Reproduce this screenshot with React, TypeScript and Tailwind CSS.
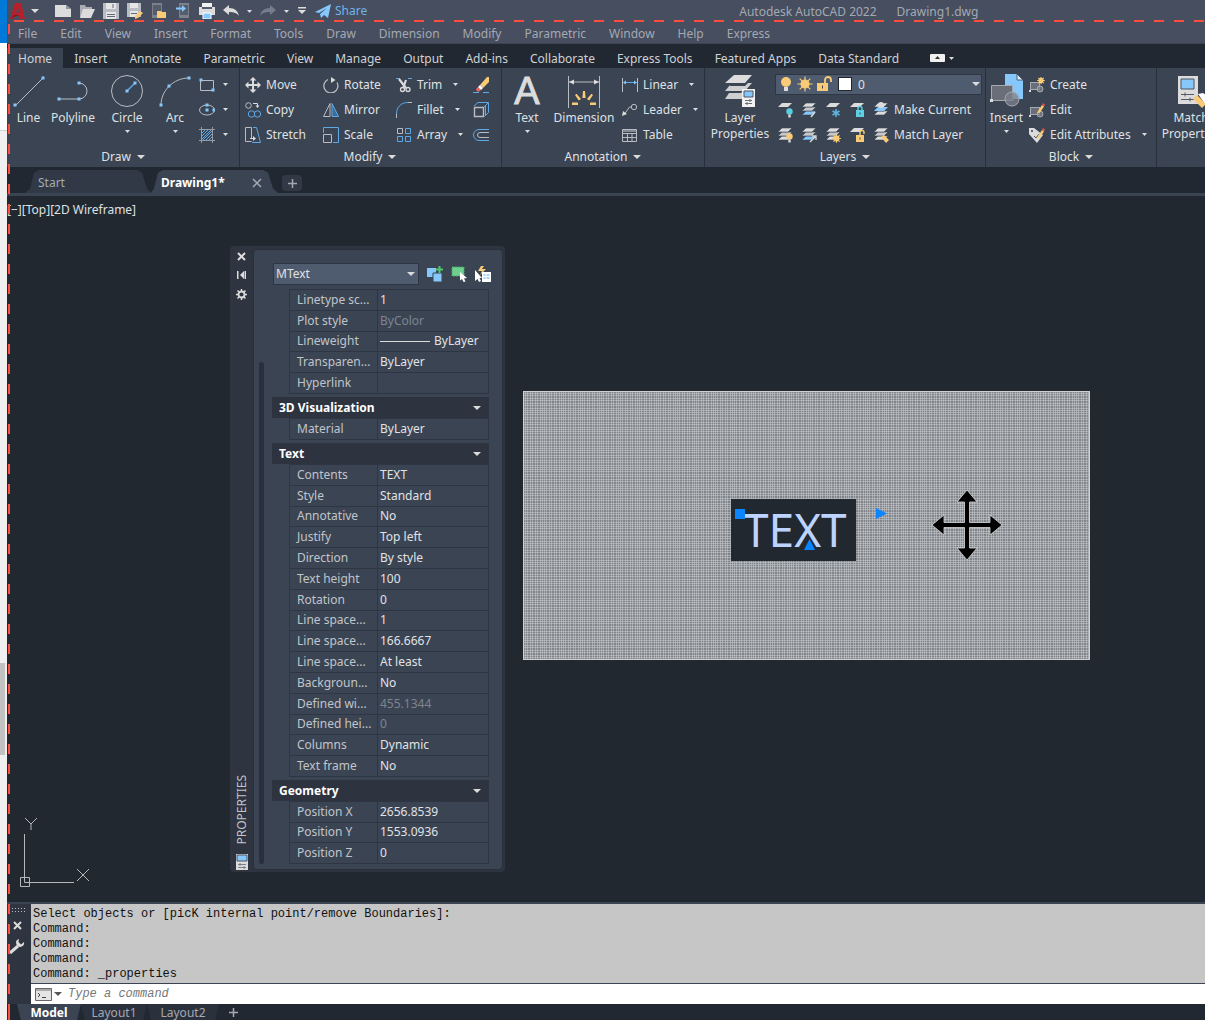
import type { ReactNode } from 'react';

const MENUS = ['File', 'Edit', 'View', 'Insert', 'Format', 'Tools', 'Draw', 'Dimension', 'Modify', 'Parametric', 'Window', 'Help', 'Express'];

const RIBBON_TABS = [
  'Home', 'Insert', 'Annotate', 'Parametric', 'View', 'Manage', 'Output', 'Add-ins',
  'Collaborate', 'Express Tools', 'Featured Apps', 'Data Standard',
];

type Row = { label: string; value: string; muted?: boolean; line?: boolean };

const GENERAL_ROWS: Row[] = [
  { label: 'Linetype sc...', value: '1' },
  { label: 'Plot style', value: 'ByColor', muted: true },
  { label: 'Lineweight', value: 'ByLayer', line: true },
  { label: 'Transparen...', value: 'ByLayer' },
  { label: 'Hyperlink', value: '' },
];

const TEXT_ROWS: Row[] = [
  { label: 'Contents', value: 'TEXT' },
  { label: 'Style', value: 'Standard' },
  { label: 'Annotative', value: 'No' },
  { label: 'Justify', value: 'Top left' },
  { label: 'Direction', value: 'By style' },
  { label: 'Text height', value: '100' },
  { label: 'Rotation', value: '0' },
  { label: 'Line space...', value: '1' },
  { label: 'Line space...', value: '166.6667' },
  { label: 'Line space...', value: 'At least' },
  { label: 'Backgroun...', value: 'No' },
  { label: 'Defined wi...', value: '455.1344', muted: true },
  { label: 'Defined hei...', value: '0', muted: true },
  { label: 'Columns', value: 'Dynamic' },
  { label: 'Text frame', value: 'No' },
];

const GEOMETRY_ROWS: Row[] = [
  { label: 'Position X', value: '2656.8539' },
  { label: 'Position Y', value: '1553.0936' },
  { label: 'Position Z', value: '0' },
];

const G = '#b9bdc3';
const W = '#dcdcdc';
const B = '#5fa8e6';
const LB = '#86c8fb';
const Y = '#f9cb77';

function Icon({ size = 16, children }: { size?: number; children: ReactNode }) {
  return (
    <svg width={size} height={size} viewBox={`0 0 ${size} ${size}`} fill="none" className="shrink-0" aria-hidden="true">
      {children}
    </svg>
  );
}

function Caret({ large = false }: { large?: boolean }) {
  return large ? (
    <svg width="8" height="4" viewBox="0 0 8 4" className="shrink-0" aria-hidden="true">
      <path d="M0 0h8L4 4z" fill={W} />
    </svg>
  ) : (
    <svg width="5" height="3" viewBox="0 0 5 3" className="shrink-0" aria-hidden="true">
      <path d="M0 0h5L2.500 3z" fill={W} />
    </svg>
  );
}

function Dot({ x, y }: { x: number; y: number }) {
  return <rect x={x - 1.5} y={y - 1.5} width="3" height="3" fill={LB} />;
}

/* Stack of three sheets shared by all layer icons */
function Sheets({ lower = W }: { lower?: string }) {
  return (
    <>
      <path d="M5 9h10l-4 4H1z" fill={lower} stroke="#3b4453" strokeWidth=".6" />
      <path d="M5 5h10l-4 4H1z" fill="#c6c8ca" stroke="#3b4453" strokeWidth=".6" />
      <path d="M5 1h10l-4 4H1z" fill={W} stroke="#3b4453" strokeWidth=".6" />
    </>
  );
}

function Sun({ cx, cy, r }: { cx: number; cy: number; r: number }) {
  const o = r * 1.9;
  const d = o * 0.7;
  return (
    <g stroke={Y} strokeWidth="1.2">
      <circle cx={cx} cy={cy} r={r} fill={Y} />
      <path d={`M${cx} ${cy - o}V${cy + o}M${cx - o} ${cy}H${cx + o}M${cx - d} ${cy - d}L${cx + d} ${cy + d}M${cx + d} ${cy - d}L${cx - d} ${cy + d}`} />
    </g>
  );
}

function Padlock({ color, open = false }: { color: string; open?: boolean }) {
  return (
    <>
      <path d="M7 8h8v7H7z" fill={color} />
      <path d={open ? 'M11 8V5.500a2 2 0 0 1 4 0V7' : 'M9 8V6.500a2 2 0 0 1 4 0V8'} stroke={color} strokeWidth="1.400" />
      <path d="M11 10.500v2" stroke="#3b4453" />
    </>
  );
}

function Bulb({ color }: { color: string }) {
  return (
    <>
      <circle cx="12.500" cy="9.500" r="3.200" fill={color} />
      <path d="M11.300 12.500h2.400v3h-2.400z" fill={W} />
    </>
  );
}

function Pencil() {
  return (
    <>
      <path d="m9 9 4-6 2 1.500-4 6-2.500 1z" fill={Y} />
      <path d="m13 3 1-2 2 1.500-1 2z" fill="#e5534b" />
    </>
  );
}

function BlockShape() {
  return (
    <>
      <rect x="1.500" y="5.500" width="9" height="7" fill="#696e78" stroke="#a6aab1" />
      <circle cx="11" cy="12" r="3" fill="#7d828b" fillOpacity=".8" stroke="#a6aab1" />
      <path d="M0 13h2v2H0z" fill={W} />
    </>
  );
}

const icons = {
  line: (
    <Icon size={32}>
      <path d="M2 31 30 3" stroke={G} />
      <Dot x={2} y={30} /><Dot x={30} y={3} />
    </Icon>
  ),
  polyline: (
    <Icon size={32}>
      <path d="M1 24h21a7.500 7.500 0 0 0 0-16" stroke={G} />
      <Dot x={2} y={24} /><Dot x={22} y={24} /><Dot x={22} y={8} />
    </Icon>
  ),
  circle: (
    <Icon size={34}>
      <circle cx="17" cy="17" r="15.500" stroke={G} />
      <path d="m17 17 8-8" stroke={B} strokeWidth="1.500" />
      <Dot x={17} y={17} /><Dot x={25} y={9} />
    </Icon>
  ),
  arc: (
    <Icon size={32}>
      <path d="M2 30C2 16 14 3 30 3" stroke={G} />
      <Dot x={2} y={30} /><Dot x={10} y={11} /><Dot x={30} y={3} />
    </Icon>
  ),
  rect: (
    <Icon>
      <path d="M1.500 3.500h13v10h-13z" stroke={G} />
      <Dot x={2} y={3} /><Dot x={14} y={13} />
    </Icon>
  ),
  ellipse: (
    <Icon>
      <ellipse cx="8" cy="8" rx="7.500" ry="5" stroke={G} />
      <Dot x={8} y={3} /><Dot x={8} y={8} /><Dot x={15} y={8} />
    </Icon>
  ),
  hatch: (
    <Icon>
      <path d="m3 6 3-3M3 9l6-6M3 12l9-9M4 13l9-9M7 13l6-6M10 13l3-3" stroke={B} />
      <path d="M2.500 0v16M13.500 0v16M0 2.500h16M0 13.500h16" stroke="#969ba4" />
    </Icon>
  ),
  move: (
    <Icon>
      <path d="M8 2v12M2 8h12" stroke={W} strokeWidth="2" />
      <path d="M8 0 4.500 3.500h7zM8 16l-3.500-3.500h7zM0 8l3.500-3.500v7zM16 8l-3.500-3.500v7z" fill={W} />
    </Icon>
  ),
  copy: (
    <Icon>
      <circle cx="3.500" cy="3.500" r="2.800" stroke={G} />
      <path d="M8 1.500h4.500V4" stroke={W} /><path d="M10.500 3.500h4L12.500 6z" fill={W} />
      <circle cx="6.500" cy="12" r="3.200" stroke={B} /><circle cx="12.500" cy="12" r="3.200" stroke={B} />
    </Icon>
  ),
  stretch: (
    <Icon>
      <path d="M6.500 14.500h-6V.5h6v11" stroke={G} />
      <path d="M8 .5h3.500l4 15H7" stroke={B} />
      <path d="M5 11.500h3" stroke={W} /><path d="m8 9 3 2.500L8 14z" fill={W} />
    </Icon>
  ),
  rotate: (
    <Icon>
      <path d="M5 2.500a7 7 0 1 0 9 3" stroke={G} strokeWidth="1.300" />
      <path d="M8 0v6l4.500-3z" fill={W} />
    </Icon>
  ),
  mirror: (
    <Icon>
      <path d="M7 1.500v13H.5z" stroke={G} /><path d="M9 1.500v13h6.500z" fill="#3d6d95" stroke={B} />
    </Icon>
  ),
  scale: (
    <Icon>
      <path d="M.5 6V.5h15v15H10" stroke={B} /><path d="M.5 7.500h8v8h-8z" stroke={G} />
    </Icon>
  ),
  trim: (
    <Icon>
      <path d="M0 1.500h4M12 1.500h4" stroke={B} />
      <path d="m3 2 7 9M10 3 7.500 10" stroke={W} strokeWidth="2.200" />
      <circle cx="6.500" cy="12.500" r="2" stroke={W} strokeWidth="1.300" /><circle cx="12" cy="12.500" r="2" stroke={W} strokeWidth="1.300" />
    </Icon>
  ),
  fillet: (
    <Icon>
      <path d="M.5 16v-4M12 .5h4" stroke={G} /><path d="M.5 12C.5 5 5 .5 12 .5" stroke={B} />
    </Icon>
  ),
  array: (
    <Icon>
      <path d="M1.500 1.500h5v5h-5z" stroke={G} /><path d="M9.500 1.500h5v5h-5zM1.500 9.500h5v5h-5zM9.500 9.500h5v5h-5z" stroke={B} />
    </Icon>
  ),
  erase: (
    <Icon>
      <path d="m7 8 7-8h2v5l-6 6z" fill={Y} />
      <path d="M5 10 8 13l-2 1.500H4L3 12z" fill="#e9655d" /><path d="m5 10 2-2 3 3-2 2z" fill="#fff" />
      <path d="M0 15.500h6M10 15.500h6" stroke={B} />
    </Icon>
  ),
  explode: (
    <Icon>
      <path d="M1.500 5.500h9v9h-9z" stroke={G} strokeWidth="1.400" />
      <path d="m1 4 4-3.500h10.500v10l-4 4M11 5l4-4M12.500 4v9" stroke={B} />
    </Icon>
  ),
  offset: (
    <Icon>
      <path d="M16 2.500H6a5.500 5.500 0 0 0 0 11h10" stroke={B} /><path d="M16 5.500H7a2.500 2.500 0 0 0 0 5h9" stroke={G} />
    </Icon>
  ),
  dimension: (
    <Icon size={34}>
      <path d="M1.500 2v32M32.500 2v32M2 8h30" stroke={G} />
      <path d="m2 8 5-2.500v5zM32 8l-5-2.500v5z" fill={W} />
      <path d="M16 17h2l.6 7h-3.200zM8 21l1.500-1.200L14 25l-2.200 1.500zM26 21l-1.500-1.200L20 25l2.200 1.500zM5 28.500h6v2.500H5zM29 28.500h-6v2.500h6z" fill={Y} />
    </Icon>
  ),
  linear: (
    <Icon>
      <path d="M.5 1v14M15.500 1v14" stroke={G} /><path d="M2 5.500h12" stroke={B} />
      <path d="m1 5.500 3-2v4zM15 5.500l-3-2v4z" fill={LB} />
    </Icon>
  ),
  leader: (
    <Icon>
      <circle cx="12" cy="5" r="2.700" stroke={G} /><path d="M9.500 5H7.500L2.500 12" stroke={G} /><path d="m0 14 1-5 4 3z" fill={W} />
    </Icon>
  ),
  table: (
    <Icon>
      <path d="M.5 2.500h14v12H.5zM.5 6.500h14M.5 10.500h14M5.500 6.500v8M10 6.500v8" stroke={G} /><path d="M1 3h13v2H1z" fill="#858a93" />
    </Icon>
  ),
  layerProps: (
    <Icon size={34}>
      <path d="M11 1h18l-7 8H2z" fill={W} /><path d="m7 11-5 6h20l7-8h-4l-3 3H7z" fill="#cdcfd1" /><path d="m6 19-4 6h17v-7l-1 1z" fill="#cdcfd1" />
      <path d="M19 15h13v18H19z" fill="#f1f1f1" /><path d="M21 17h9v6h-9z" fill={LB} stroke="#4c5566" />
      <path d="M22 26.500h7M22 29.500h7M27 25v3M24 28v3" stroke="#6a6f78" />
    </Icon>
  ),
  insertBlock: (
    <Icon size={34}>
      <path d="M15 0h12l6 6v19H15z" fill={LB} /><path d="M27 0v6h6z" fill="#d9ebfa" stroke="#3b4453" strokeWidth=".8" />
      <path d="M1.500 11.500h21v15h-21z" fill="#696e78" stroke="#a6aab1" /><path d="M0 25h3v3H0z" fill={W} />
      <circle cx="22" cy="25" r="7" fill="#7d828b" fillOpacity=".75" stroke="#a6aab1" />
    </Icon>
  ),
  create: <Icon><BlockShape /><Sun cx={12} cy={3.5} r={2} /></Icon>,
  editBlock: <Icon><BlockShape /><Pencil /></Icon>,
  attributes: (
    <Icon>
      <path d="M0 1h5l9 7-6 8-8-9z" fill={W} /><circle cx="3" cy="4" r="1" fill="#3b4453" /><path d="m5 9 2 2 3-4" stroke="#555b66" /><Pencil />
    </Icon>
  ),
  match: (
    <Icon size={34}>
      <path d="M4 2h20v28H4z" fill={W} /><path d="M7 5h13v10H7z" fill={LB} stroke="#4c5566" />
      <path d="M7 20.500h13M7 25.500h13M11 18.500v4M16 23.500v4" stroke="#555b66" />
      <path d="m19 25 4-4 9 9-4 4z" fill={Y} /><path d="m24 20 5-1 5 3v8l-2 1z" fill="#fff" />
    </Icon>
  ),
};

const layerIcons = [
  [
    <Icon key="off"><path d="M5 1h10l-4 4H1z" fill={W} /><Bulb color="#58cfe0" /></Icon>,
    <Icon key="iso"><Sheets lower={LB} /><path d="m10 15 4-5" stroke={W} strokeWidth="1.500" /></Icon>,
    <Icon key="freeze"><path d="M5 1h10l-4 4H1z" fill={W} /><path d="M11 7v8M7.500 9l7 4M7.500 13l7-4" stroke="#5fb6e0" strokeWidth="1.500" /></Icon>,
    <Icon key="lock"><path d="M5 1h10l-4 4H1z" fill={W} /><Padlock color="#5fd0e2" /></Icon>,
  ],
  [
    <Icon key="on"><Sheets /><Bulb color={Y} /></Icon>,
    <Icon key="uniso"><Sheets lower={LB} /><path d="m9 15 5-5M11 9h4v4" stroke={W} strokeWidth="1.300" /></Icon>,
    <Icon key="thaw"><Sheets /><Sun cx={11.5} cy={11.5} r={2.3} /></Icon>,
    <Icon key="unlock"><path d="M5 1h10l-4 4H1z" fill={W} /><Padlock color={Y} open /></Icon>,
  ],
];

function BigTool({ icon, label, second, caret = false, className }: { icon: ReactNode; label: string; second?: string; caret?: boolean; className: string }) {
  return (
    <button type="button" className={`flex shrink-0 flex-col items-center ${className}`}>
      <span className="flex h-[38px] items-center">{icon}</span>
      <span className="leading-4">{label}</span>
      {second && <span className="leading-4">{second}</span>}
      {caret && <span className="pt-1"><Caret /></span>}
    </button>
  );
}

function SmallTool({ icon, label, caret = false }: { icon: ReactNode; label?: string; caret?: boolean }) {
  return (
    <button type="button" className="flex h-[25px] items-center gap-[5px] whitespace-nowrap" aria-label={label ?? 'Tool'}>
      {icon}
      {label}
      {caret && <span className={label ? 'pl-[6px]' : 'pl-[3px]'}><Caret /></span>}
    </button>
  );
}

function Panel({ title, className, children }: { title?: string; className: string; children: ReactNode }) {
  return (
    <section className={`flex shrink-0 flex-col border-r border-[#2a303b] ${className}`}>
      <div className="flex h-20 items-start pt-1">{children}</div>
      {title && (
        <button type="button" className="flex h-5 items-center justify-center gap-[6px]">
          {title}
          <Caret large />
        </button>
      )}
    </section>
  );
}

function QuickAccess() {
  return (
    <div className="flex items-center gap-2">
      <Icon><path d="M0 2h11l5 4v8H0z" fill={W} /><path d="M11 2v4h5z" fill="#8f949d" /></Icon>
      <Icon><path d="M1 14V2h5l1 2h6v3" fill="#a9adb3" /><path d="M4 6h12l-4 9H1z" fill={W} /></Icon>
      <Icon><path d="M0 0h16v16H0z" fill={G} /><path d="M3 0h10v6H3zM3 9h10v7H3z" fill="#e6e6e6" /><path d="M4 11.500h8M4 13.500h8M10 1v4" stroke="#626978" /></Icon>
      <Icon><path d="M0 0h14v14H0z" fill={G} /><path d="M3 0h8v5H3zM3 8h8v6H3z" fill="#e6e6e6" /><path d="M4 10.500h6" stroke="#626978" /><path d="m8 13 5-5 3 2-5 5-3 1z" fill={Y} /></Icon>
      <Icon><path d="M1 0h10v15H1z" fill="#7c818b" /><path d="M2 2h8v10H2z" fill="#555c6a" /><path d="M6 8h4l1 1h4v6H6z" fill={Y} /></Icon>
      <Icon><path d="M4 0h10v15H4z" fill="#7c818b" /><path d="M5 2h8v10H5z" fill="#555c6a" /><path d="M1 4.500h6V2l4 3.500L7 9V6.500H1z" fill={LB} /></Icon>
      <Icon><path d="M3 0h10v4H3z" fill="#f1f1f1" /><path d="M0 4h16v8H0z" fill={W} /><path d="M3 4h10v2H3z" fill="#555c6a" /><path d="M4 10h8v6H4z" fill={LB} stroke="#fff" /></Icon>
      <Icon><path d="m0 7 6-5v3c6 0 9 3 10 8-2-3-5-4-10-4v3z" fill={W} /></Icon>
      <Caret />
      <Icon><path d="m16 7-6-5v3C4 5 1 8 0 13c2-3 5-4 10-4v3z" fill="#757c8a" /></Icon>
      <Caret />
      <svg width="10" height="8" viewBox="0 0 10 8" aria-hidden="true"><path d="M1 0h8v1.500H1zM1 3h8L5 7z" fill={W} /></svg>
    </div>
  );
}

function PropertyTable({ rows, className }: { rows: Row[]; className: string }) {
  return (
    <table className={`ml-[17px] w-[200px] table-fixed border-collapse ${className}`}>
      <tbody>
        {rows.map((row, i) => (
          <tr key={i}>
            <th scope="row" className="w-[88px] border border-[#2f3643] p-0 pl-[7px] text-left font-normal leading-4 whitespace-nowrap text-[#c0c4ca]">
              {row.label}
            </th>
            <td className={`border border-[#2f3643] p-0 pl-[2px] leading-4 ${row.muted ? 'text-[#7d848f]' : 'text-[#e0e2e5]'}`}>
              <span className="flex items-center gap-1">
                {row.line && <span className="h-px w-[50px] bg-[#dcdcdc]" />}
                {row.value}
              </span>
            </td>
          </tr>
        ))}
      </tbody>
    </table>
  );
}

function SectionHeader({ title }: { title: string }) {
  return (
    <button type="button" className="mt-[3px] flex h-[21px] w-[217px] items-center justify-between bg-[#2d333f] pr-2 pl-[7px] font-bold text-white">
      {title}
      <Caret large />
    </button>
  );
}

function PropertiesPalette() {
  return (
    <aside className="absolute top-[50px] left-[223px] flex w-[275px] rounded bg-[#2e3440] pt-[3px] pr-[2px] pb-[2px]">
      <div className="flex w-[23px] shrink-0 flex-col items-center">
        <button type="button" aria-label="Close" className="pt-[3px]">
          <svg width="9" height="9" viewBox="0 0 9 9" aria-hidden="true"><path d="m1 1 7 7m0-7L1 8" stroke={W} strokeWidth="2" /></svg>
        </button>
        <button type="button" aria-label="Auto-hide" className="pt-[10px]">
          <svg width="9" height="8" viewBox="0 0 9 8" aria-hidden="true"><path d="M0 0h1.500v8H0zM7.500 0H9v8H7.500zM7 0v8L3 4z" fill={W} /></svg>
        </button>
        <button type="button" aria-label="Settings" className="pt-[10px]">
          <svg width="11" height="11" viewBox="0 0 11 11" fill="none" aria-hidden="true">
            <circle cx="5.500" cy="5.500" r="3" stroke={W} strokeWidth="1.800" />
            <path d="M5.500 0v2.500M5.500 8.500V11M0 5.500h2.500M8.500 5.500H11M1.500 1.500l2 2M7.500 7.500l2 2M9.500 1.500l-2 2M3.500 7.500l-2 2" stroke={W} strokeWidth="1.500" />
          </svg>
        </button>
        <span className="mt-auto rotate-180 leading-4 text-[#c0c4ca] [writing-mode:vertical-rl]">PROPERTIES</span>
        <svg width="12" height="16" viewBox="0 0 12 16" className="mt-[10px]" aria-hidden="true">
          <path d="M0 0h12v16H0z" fill={W} /><path d="M1 1h10v6H1z" fill={LB} stroke="#4c5566" /><path d="M2 10.500h8M2 13.500h8M4 9v3M8 12v3" stroke="#7b808a" />
        </svg>
      </div>
      <div className="flex flex-1 gap-2 rounded border border-[#293039] bg-[#3b4453] pt-[13px] pr-[11px] pb-[5px] pl-[5px]">
        <div className="mt-[99px] w-[5px] shrink-0 rounded-full bg-[#2a303b]" />
        <div className="flex-1">
          <div className="mb-1 flex items-center gap-2 pl-px">
            <div className="relative">
              <select aria-label="Object type" className="h-[22px] w-[146px] appearance-none border border-[#2f3643] bg-[#4f5b6e] pl-[2px] text-[#e0e2e5]">
                <option>MText</option>
              </select>
              <span className="pointer-events-none absolute top-[9px] right-1 flex"><Caret large /></span>
            </div>
            <button type="button" aria-label="Toggle PICKADD">
              <Icon><path d="M0 2h9v9H0z" fill={LB} /><path d="M6 7h9v9H6z" fill={LB} stroke="#3b4453" /><path d="M12.500 0v7M9 3.500h7" stroke="#4fc56d" strokeWidth="2" /></Icon>
            </button>
            <button type="button" aria-label="Select objects">
              <Icon><path d="M1 1h12v9H1z" fill="#6fcf8e" stroke="#49a868" strokeDasharray="2 1" /><path d="m9 6 7 6-3 .5 1.500 3-2 .5-1.500-3-2 1.500z" fill="#fff" /></Icon>
            </button>
            <button type="button" aria-label="Quick select">
              <Icon><path d="M6 0 3 5h4L5 9l6-6H7l2-3z" fill={Y} /><path d="M0 4v11l2.500-2 1.500 3 2-1-1.500-3H7z" fill="#fff" /><path d="M7 6h9v10H7z" fill="#fff" /><path d="M8.500 9h2M8.500 12h2M11.500 9h3M11.500 12h3" stroke={B} /></Icon>
            </button>
          </div>
          <PropertyTable rows={GENERAL_ROWS} className="h-[105px]" />
          <SectionHeader title="3D Visualization" />
          <PropertyTable rows={[{ label: 'Material', value: 'ByLayer' }]} className="h-[22px]" />
          <SectionHeader title="Text" />
          <PropertyTable rows={TEXT_ROWS} className="h-[313px]" />
          <SectionHeader title="Geometry" />
          <PropertyTable rows={GEOMETRY_ROWS} className="h-[63px]" />
        </div>
      </div>
    </aside>
  );
}

function Ribbon() {
  return (
    <div className="flex h-[99px] overflow-hidden bg-[#3b4453] text-[#dfe1e4]">
      <Panel title="Draw" className="w-[233px]">
        <BigTool icon={icons.line} label="Line" className="w-[43px]" />
        <BigTool icon={icons.polyline} label="Polyline" className="w-[46px]" />
        <BigTool icon={icons.circle} label="Circle" caret className="w-[62px]" />
        <BigTool icon={icons.arc} label="Arc" caret className="w-[34px]" />
        <div className="ml-[7px]">
          <SmallTool icon={icons.rect} caret />
          <SmallTool icon={icons.ellipse} caret />
          <SmallTool icon={icons.hatch} caret />
        </div>
      </Panel>

      <Panel title="Modify" className="w-[262px] pr-[6px] pl-[5px]">
        <div className="w-[78px]">
          <SmallTool icon={icons.move} label="Move" />
          <SmallTool icon={icons.copy} label="Copy" />
          <SmallTool icon={icons.stretch} label="Stretch" />
        </div>
        <div className="w-[73px]">
          <SmallTool icon={icons.rotate} label="Rotate" />
          <SmallTool icon={icons.mirror} label="Mirror" />
          <SmallTool icon={icons.scale} label="Scale" />
        </div>
        <div className="w-[77px]">
          <SmallTool icon={icons.trim} label="Trim" caret />
          <SmallTool icon={icons.fillet} label="Fillet" caret />
          <SmallTool icon={icons.array} label="Array" caret />
        </div>
        <div>
          <SmallTool icon={icons.erase} />
          <SmallTool icon={icons.explode} />
          <SmallTool icon={icons.offset} />
        </div>
      </Panel>

      <Panel title="Annotation" className="w-[203px]">
        <BigTool icon={<span className="font-['Liberation_Sans',sans-serif] text-[38px] leading-none text-[#dcdcdc] [-webkit-text-stroke:1px_#dcdcdc]" aria-hidden="true">A</span>} label="Text" caret className="w-[50px]" />
        <BigTool icon={icons.dimension} label="Dimension" className="w-[64px]" />
        <div className="ml-[6px]">
          <SmallTool icon={icons.linear} label="Linear" caret />
          <SmallTool icon={icons.leader} label="Leader" caret />
          <SmallTool icon={icons.table} label="Table" />
        </div>
      </Panel>

      <Panel title="Layers" className="w-[281px]">
        <BigTool icon={icons.layerProps} label="Layer" second="Properties" className="w-[70px]" />
        <div className="w-[207px]">
          <div className="relative flex h-[25px] items-center">
            <select aria-label="Layer" className="h-[21px] w-full appearance-none border border-[#2f3643] bg-[#4f5b6e] pl-[82px]">
              <option>0</option>
            </select>
            <div className="pointer-events-none absolute inset-x-0 top-1 flex items-center gap-[3px] pr-[2px] pl-[3px]">
              <Icon><circle cx="8" cy="6" r="5" fill={Y} /><path d="M6 11h4v4H6z" fill={W} /></Icon>
              <Icon><Sun cx={8} cy={8} r={4} /></Icon>
              <Icon><path d="M1 7h11v8H1z" fill={Y} /><path d="M9 7V4a3 3 0 0 1 6 0v2" stroke={Y} strokeWidth="1.800" /><path d="M6.500 9.500v3" stroke="#3b4453" /></Icon>
              <span className="ml-[3px] size-[14px] border border-[#20252e] bg-white" />
              <span className="ml-auto"><Caret large /></span>
            </div>
          </div>
          {layerIcons.map((row, i) => (
            <div key={i} className="flex gap-2 pl-[2px]">
              {row.map((icon, n) => <SmallTool key={n} icon={icon} />)}
              <SmallTool
                icon={i === 0
                  ? <Icon><Sheets /><path d="M5 5h10l-4 4H1z" fill={LB} /><circle cx="8" cy="3" r="3" fill={W} /></Icon>
                  : <Icon><Sheets /><path d="m8 10 3-2 5 5-3 3z" fill={Y} /></Icon>}
                label={i === 0 ? 'Make Current' : 'Match Layer'}
              />
            </div>
          ))}
        </div>
      </Panel>

      <Panel title="Block" className="w-[171px]">
        <BigTool icon={icons.insertBlock} label="Insert" caret className="w-[41px]" />
        <div className="ml-[2px]">
          <SmallTool icon={icons.create} label="Create" />
          <SmallTool icon={icons.editBlock} label="Edit" />
          <SmallTool icon={icons.attributes} label="Edit Attributes" caret />
        </div>
      </Panel>

      <Panel className="w-[72px]">
        <BigTool icon={icons.match} label="Match" second="Properties" className="w-[68px]" />
      </Panel>
    </div>
  );
}

function DrawingCanvas() {
  return (
    <main className="relative min-h-[700px] flex-1 overflow-hidden bg-[#212830]">
      <p className="pt-[6px] leading-4 text-[#dfe1e4]">[−][Top][2D Wireframe]</p>

      {/* Hatched rectangle with the selected text object */}
      <svg className="absolute top-[195px] left-[516px]" width="567" height="269" aria-hidden="true">
        <defs>
          <pattern id="plaid" width="19" height="19" patternUnits="userSpaceOnUse">
            <path d="M0 0h19v19H0z" fill="#808488" />
            <path d="M0 .5h19M0 2.500h19M0 4.500h19M0 7.500h19M0 9.500h19M0 12.500h19M0 14.500h19M0 17.500h19" stroke="#d6d8da" strokeOpacity=".45" />
            <path d="M.5 0v19M2.500 0v19M4.500 0v19M7.500 0v19M9.500 0v19M12.500 0v19M14.500 0v19M17.500 0v19" stroke="#d6d8da" strokeOpacity=".45" />
          </pattern>
        </defs>
        <rect x=".5" y=".5" width="566" height="268" fill="url(#plaid)" stroke="#cfd1d3" />
      </svg>
      <div className="absolute top-[303px] left-[724px] h-[62px] w-[125px] bg-[#212830] pl-3 text-[46px] leading-[60px] text-[#bdd3ff]">
        TEXT
      </div>
      <div className="absolute top-[313px] left-[728px] size-[10px] bg-[#0a84ff]" />
      <svg className="absolute top-[343px] left-[797px]" width="11" height="11" aria-hidden="true"><path d="M5.500 0 11 11H0z" fill="#0a84ff" /></svg>
      <svg className="absolute top-[312px] left-[869px]" width="11" height="11" aria-hidden="true"><path d="M0 0v11l11-5.500z" fill="#0a84ff" /></svg>
      <svg className="absolute top-[293px] left-[924px]" width="72" height="72" aria-hidden="true">
        <path
          d="M36 1 46 13H38.500V33.500H59V26L71 36 59 46V38.500H38.500V59H46L36 71 26 59H33.500V38.500H13V46L1 36 13 26V33.500H33.500V13H26z"
          fill="#000" stroke="#d8d8d8" strokeWidth=".8"
        />
      </svg>

      {/* UCS icon */}
      <svg className="absolute bottom-[11px] left-[12px]" width="72" height="74" fill="none" stroke="#b5b8bb" aria-hidden="true">
        <path d="M5.500 17v48.500H55M1.500 60.500h9v9h-9z" />
        <path d="m6 1 6 6 6-6M12 7v6M58 52l12 12M70 52 58 64" />
      </svg>

      <PropertiesPalette />
    </main>
  );
}

function CommandWindow() {
  return (
    <section className="flex border-t-2 border-[#3b4453] bg-[#2e3440] font-['Liberation_Mono',monospace]">
      <div className="flex w-6 flex-col items-center gap-2 pt-[3px] pr-1">
        <span className="h-[6px] w-[18px] bg-[radial-gradient(circle,#b9bdc3_1px,transparent_1px)] bg-size-[3px_3px]" />
        <button type="button" aria-label="Close command line">
          <svg width="9" height="9" viewBox="0 0 9 9" aria-hidden="true"><path d="m1 1 7 7m0-7L1 8" stroke={W} strokeWidth="2" /></svg>
        </button>
        <button type="button" aria-label="Customize">
          <Icon><path d="M1 15 9 8" stroke={W} strokeWidth="3" /><path d="M15 4a4 4 0 1 1-5-3L9.500 4 12 6.500z" fill={W} /></Icon>
        </button>
      </div>
      <div className="min-w-0 flex-1">
        <div className="bg-[#c6c6c6] pt-[3px] pb-px pl-[2px] leading-[15px] text-[#111]">
          <p>Select objects or [picK internal point/remove Boundaries]:</p>
          <p>Command:</p>
          <p>Command:</p>
          <p>Command:</p>
          <p>Command: _properties</p>
        </div>
        <div className="flex h-[21px] items-center gap-[2px] border-t border-[#3b4453] bg-white pl-1">
          <svg width="17" height="13" viewBox="0 0 17 13" fill="none" aria-hidden="true">
            <path d="M.5.5h16v12H.5z" fill="#e4e4e4" stroke="#666" /><path d="M1 1h15v2H1z" fill="#aaa" /><path d="m3 5 2 2-2 2M7 9.500h4" stroke="#444" />
          </svg>
          <svg width="8" height="4" viewBox="0 0 8 4" aria-hidden="true"><path d="M0 0h8L4 4z" fill="#555" /></svg>
          <input type="text" aria-label="Command line" placeholder="Type a command" className="ml-1 flex-1 outline-none placeholder:text-[#777] placeholder:italic" />
        </div>
      </div>
    </section>
  );
}

export default function App() {
  return (
    <div className="flex min-h-screen w-full overflow-hidden bg-[#f0f0f0] font-['Noto_Sans',sans-serif] text-[12px]">
      {/* Sliver of the window behind */}
      <div className="flex w-[7px] shrink-0 flex-col">
        <div className="h-[43px] bg-[#0078d7]" />
        <div className="h-[88px] border-b border-[#d0d0d0] bg-white" />
        <div className="mt-[532px] h-[92px] w-[5px] bg-[#c2c2c2]" />
      </div>

      <div className="relative flex min-w-0 flex-1 flex-col overflow-hidden">
        <header className="bg-[#464e60] text-[#a4a9b2]">
          <div className="flex h-[22px] items-center whitespace-nowrap">
            <svg width="19" height="18" viewBox="0 0 19 18" aria-hidden="true">
              <path d="M3 17 8 1h6l4 16h-5l-.8-3H8l-1.500 3z" fill="#b5202a" /><path d="m9 10.500 2-5 1 5z" fill="#464e60" /><path d="m3 17 4-4h6l-7 2z" fill="#7f1620" />
            </svg>
            <span className="mr-4 ml-[5px]"><Caret large /></span>
            <QuickAccess />
            <button type="button" className="ml-2 flex items-center gap-1 text-[#6fb4ea]">
              <Icon><path d="M0 9 16 1l-3 14-4-3-3 3-1-4 7-6-8 5z" fill={LB} /></Icon>
              Share
            </button>
            <p className="ml-[372px] flex gap-5 pt-[2px]">
              <span>Autodesk AutoCAD 2022</span>
              <span>Drawing1.dwg</span>
            </p>
          </div>
          <nav className="flex h-[22px] items-center gap-[23px] overflow-hidden border-b border-[#3b4453] pt-[3px] pl-[11px] whitespace-nowrap">
            {MENUS.map((menu) => <button key={menu} type="button">{menu}</button>)}
          </nav>
        </header>

        <nav className="flex h-6 items-end overflow-hidden bg-[#222831] whitespace-nowrap text-[#cfd2d6]">
          {RIBBON_TABS.map((tab, i) => (
            <button key={tab} type="button" className={`h-5 px-[11px] pt-px ${i === 0 ? 'bg-[#3b4453]' : ''}`}>
              {tab}
            </button>
          ))}
          <button type="button" aria-label="Minimize ribbon" className="ml-5 flex h-5 items-center gap-1">
            <svg width="15" height="8" viewBox="0 0 15 8" aria-hidden="true"><rect width="15" height="8" rx="1" fill="#f1f1f1" /><path d="m5 5 2.500-3L10 5z" fill="#333" /></svg>
            <Caret />
          </button>
        </nav>

        <Ribbon />

        <nav className="flex h-[29px] items-end overflow-hidden border-b-[3px] border-[#3b4453] bg-[#222831] pl-[18px]">
          <button type="button" className="h-[23px] w-[126px] bg-[#323946] pt-[2px] pl-[13px] text-left text-[#a4a9b2] [clip-path:polygon(0_100%,5px_80%,9px_12%,14px_0,112px_0,117px_12%,122px_80%,100%_100%)]">
            Start
          </button>
          <button type="button" className="flex h-[23px] w-[127px] items-center justify-between bg-[#3b4453] pt-[2px] pr-4 pl-[10px] font-bold text-white [clip-path:polygon(0_100%,3px_80%,7px_12%,12px_0,112px_0,117px_12%,122px_80%,100%_100%)]">
            Drawing1*
            <svg width="10" height="10" viewBox="0 0 10 10" aria-hidden="true"><path d="m1 1 8 8m0-8L1 9" stroke="#a4a9b2" strokeWidth="1.500" /></svg>
          </button>
          <button type="button" aria-label="New tab" className="mb-[2px] ml-1 flex h-4 w-5 items-center justify-center rounded bg-[#323946]">
            <svg width="9" height="9" viewBox="0 0 9 9" aria-hidden="true"><path d="M4.500 0v9M0 4.500h9" stroke="#a4a9b2" strokeWidth="1.500" /></svg>
          </button>
        </nav>

        <DrawingCanvas />
        <CommandWindow />

        <nav className="flex h-4 items-center overflow-hidden bg-[#222831] pl-[10px] text-[#a4a9b2]">
          <button type="button" className="h-4 w-[64px] bg-[#3b4453] font-bold text-white [clip-path:polygon(0_0,100%_0,60px_100%,4px_100%)]">Model</button>
          <button type="button" className="h-4 w-[66px] bg-[#2b313c] [clip-path:polygon(0_0,100%_0,62px_100%,4px_100%)]">Layout1</button>
          <button type="button" className="h-4 w-[72px] bg-[#2b313c] [clip-path:polygon(0_0,100%_0,68px_100%,4px_100%)]">Layout2</button>
          <button type="button" aria-label="New layout" className="ml-[10px]">
            <svg width="9" height="9" viewBox="0 0 9 9" aria-hidden="true"><path d="M4.500 0v9M0 4.500h9" stroke="#a4a9b2" strokeWidth="1.500" /></svg>
          </button>
        </nav>

        {/* Dashed capture frame */}
        <div className="pointer-events-none absolute top-5 right-0 left-px h-[2px] bg-[repeating-linear-gradient(90deg,#fb4e3e_0_10px,transparent_10px_20px)] bg-position-[6px_0]" />
        <div className="pointer-events-none absolute top-6 bottom-4 left-px w-[2px] bg-[repeating-linear-gradient(180deg,#fb4e3e_0_10px,transparent_10px_20px)]" />
        <div className="pointer-events-none absolute bottom-0 left-px h-4 w-[2px] bg-[#fb4e3e]" />
      </div>
    </div>
  );
}
